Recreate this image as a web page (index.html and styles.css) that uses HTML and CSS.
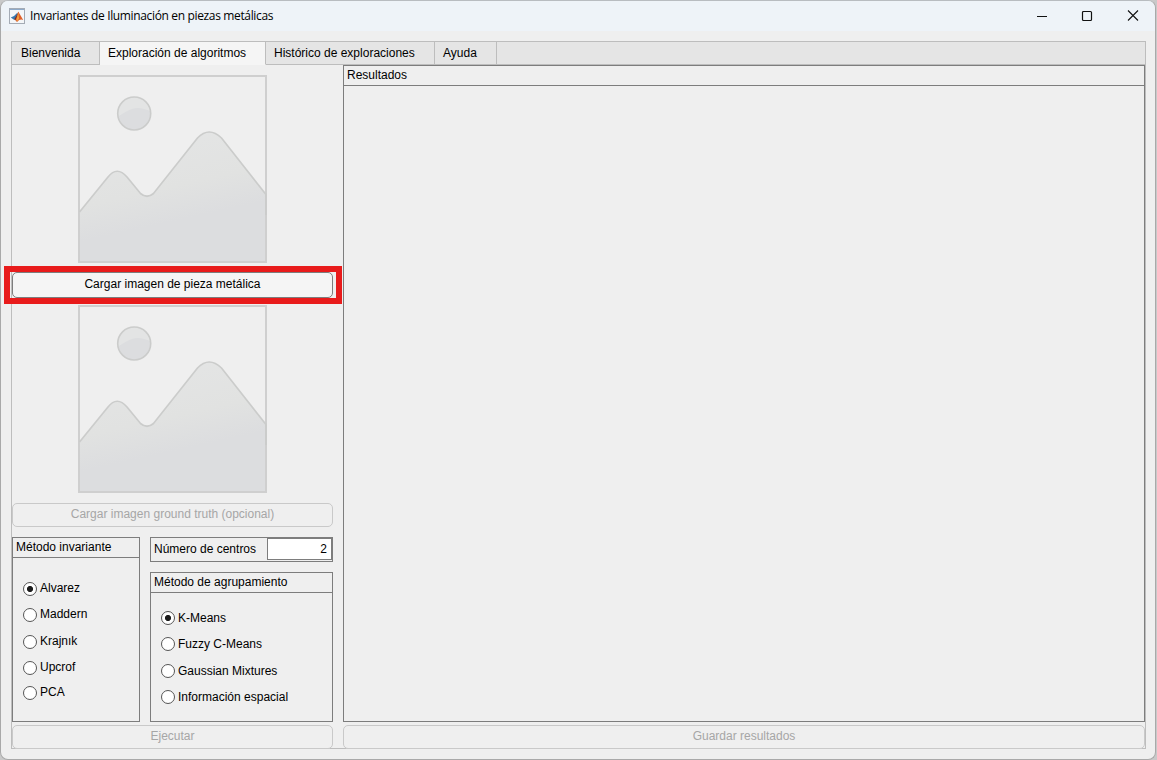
FILE: index.html
```html
<!DOCTYPE html>
<html lang="es">
<head>
<meta charset="utf-8">
<title>Invariantes de Iluminación en piezas metálicas</title>
<link rel="stylesheet" href="styles.css">
</head>
<body>
<svg class="defs" width="0" height="0">
  <defs>
    <linearGradient id="shade" gradientUnits="userSpaceOnUse" x1="80" y1="55" x2="101" y2="150">
      <stop offset="0" stop-color="#e4e5e5"/>
      <stop offset=".6" stop-color="#e1e2e1"/>
      <stop offset=".95" stop-color="#dcdddf"/>
    </linearGradient>
    <clipPath id="sun"><circle cx="56.2" cy="38.5" r="16.5"/></clipPath>
    <symbol id="placeholder" viewBox="0 0 189 188">
      <path d="M1.5 137 L30 102 Q39 90.500 49 102 L62.500 118.500 Q69 124 75.500 118.500 L119.500 63 Q131 51 143.500 63 L188 119.500 V187 H1.500 Z" fill="url(#shade)"/>
      <rect x="1" y="1" width="187" height="186" fill="none" stroke="#cfcfcf" stroke-width="2"/>
      <path d="M1.500 137 L30 102 Q39 90.500 49 102 L62.500 118.500 Q69 124 75.500 118.500 L119.500 63 Q131 51 143.500 63 L188 119.500 V140" fill="none" stroke="#cbcccb" stroke-width="1.700"/>
      <circle cx="56.200" cy="38.500" r="16.500" fill="#e3e4e4"/>
      <path d="M38 43 Q48 36 54 34 Q62 31 74 37 V58 H38Z" fill="#dcdddf" clip-path="url(#sun)"/>
      <circle cx="56.200" cy="38.500" r="16.500" fill="none" stroke="#cbcccb" stroke-width="1.600"/>
    </symbol>
  </defs>
</svg>
<div class="window">
  <header class="titlebar">
    <svg class="logo" width="16" height="16" viewBox="0 0 16 16">
      <rect x=".5" y=".5" width="15" height="15" fill="#f4f6f8" stroke="#a4abb5"/>
      <path d="M1 1h14v1H1z" fill="#8eaaca"/>
      <path d="M1.800 9.500 L5 8 L8.500 4.500 L7.500 9.500 L5 11.800Z" fill="#3878ae"/>
      <path d="M5 11.800 L7 8.500 L9.300 4 L10 7.500 L8 13.500 Q6.500 11.500 5 11.800Z" fill="#7b2c22"/>
      <path d="M9.300 3.500 Q11 6.500 14.200 12 Q11 10.500 8 14 L6.500 12 Q8.500 8.500 9.300 3.500Z" fill="#e0602a"/>
      <path d="M9.300 4.500 L10 10.500 L8 13.500 L7.500 11.500Z" fill="#f2a340"/>
    </svg>
    <span class="title">Invariantes de Iluminación en piezas metálicas</span>
    <svg class="controls" width="102" height="12" viewBox="0 0 102 12" fill="none" stroke="#111">
      <path d="M0 6.500H10" stroke-width="1"/>
      <rect x="45.500" y="1.500" width="9" height="9" rx="1" stroke-width="1.200"/>
      <path d="M91 .500 L101 10.500 M101 .500 L91 10.500" stroke-width="1.100"/>
    </svg>
  </header>
  <main class="tabgroup">
    <nav class="tabs">
      <span class="tab t1">Bienvenida</span>
      <span class="tab t2 active">Exploración de algoritmos</span>
      <span class="tab t3">Histórico de exploraciones</span>
      <span class="tab t4">Ayuda</span>
    </nav>
    <div class="content">
      <section class="left">
        <svg class="picture" width="189" height="188"><use href="#placeholder"/></svg>
        <div class="highlight"><button class="button load">Cargar imagen de pieza metálica</button></div>
        <svg class="picture second" width="189" height="188"><use href="#placeholder"/></svg>
        <button class="button truth" disabled>Cargar imagen ground truth (opcional)</button>
        <div class="options">
          <div class="panel invariant">
            <h2>Método invariante</h2>
            <div class="radios">
              <label><i class="dot on"></i><span>Alvarez</span></label>
              <label><i class="dot"></i><span>Maddern</span></label>
              <label><i class="dot"></i><span>Krajnık</span></label>
              <label><i class="dot"></i><span>Upcrof</span></label>
              <label><i class="dot"></i><span>PCA</span></label>
            </div>
          </div>
          <div class="side">
            <div class="panel centers"><span>Número de centros</span><div class="field">2</div></div>
            <div class="panel grouping">
              <h2>Método de agrupamiento</h2>
              <div class="radios">
                <label><i class="dot on"></i><span>K-Means</span></label>
                <label><i class="dot"></i><span>Fuzzy C-Means</span></label>
                <label><i class="dot"></i><span>Gaussian Mixtures</span></label>
                <label><i class="dot"></i><span>Información espacial</span></label>
              </div>
            </div>
          </div>
        </div>
        <button class="button run" disabled>Ejecutar</button>
      </section>
      <section class="right">
        <div class="panel results"><h2>Resultados</h2></div>
        <button class="button run" disabled>Guardar resultados</button>
      </section>
    </div>
  </main>
</div>
</body>
</html>
```
FILE: styles.css
```css
* { box-sizing: border-box; }
body {
  margin: 0;
  width: 1157px;
  height: 760px;
  overflow: hidden;
  background: #c9c9c9;
  font: 12px/14px "Liberation Sans", Arial, sans-serif;
  color: #000;
}
.defs { position: absolute; }
.window {
  width: 1156px;
  height: 760px;
  border: 1px solid #a9a9a9;
  border-top-color: #b8bcc0;
  border-radius: 8px;
  background: #efefef;
  overflow: hidden;
}
.titlebar {
  height: 30px;
  display: flex;
  align-items: center;
  padding: 0 16px 0 8px;
  background: #eef3f8;
}
.title {
  flex: 1;
  margin-left: 5px;
  font: 12px/16px "Open Sans", "Noto Sans", sans-serif;
  letter-spacing: -0.35px;
  white-space: nowrap;
}
.controls { display: block; }
.tabgroup {
  width: 1135px;
  height: 708px;
  margin: 10px 0 0 10px;
  border: 1px solid #bdbdbd;
}
.tabs {
  height: 23px;
  display: flex;
  background: #e5e5e5;
  border-bottom: 1px solid #bdbdbd;
}
.tab {
  height: 23px;
  padding: 4px 0 0 9px;
  border-right: 1px solid #bdbdbd;
  border-bottom: 1px solid #bdbdbd;
  white-space: nowrap;
}
.active { background: #f5f5f5; border-bottom-color: #f5f5f5; }
.t1 { width: 88px; }
.t2 { width: 166px; padding-left: 8px; }
.t3 { width: 169px; padding-left: 8px; }
.t4 { width: 62px; padding-left: 8px; }
.content { display: flex; gap: 10px; }
.left { width: 321px; display: flex; flex-direction: column; }
.right { width: 802px; display: flex; flex-direction: column; }
.picture { display: block; margin: 10px 0 0 66px; flex: none; }
.highlight {
  width: 338px;
  height: 38px;
  margin: 3px 0 0 -8px;
  padding: 0 2px;
  border: 6px solid #e81b1b;
  flex: none;
  z-index: 1;
}
.second { margin-top: 1px; }
.button {
  display: block;
  width: 100%;
  padding: 0 0 1px;
  border: 1px solid #7d7d7d;
  border-radius: 5px;
  background: #f5f5f5;
  font: inherit;
  color: #000;
  text-align: center;
  flex: none;
}
.button:disabled { border-color: #c9c9c9; background: #efefef; color: #a6a6a6; }
.load { width: 321px; height: 26px; padding-bottom: 3px; }
.truth { height: 24px; margin-top: 10px; padding-bottom: 3px; }
.run { height: 24px; margin-top: 3px; padding-bottom: 2px; }
.options { display: flex; gap: 10px; margin-top: 10px; height: 185px; }
.panel { border: 1px solid #7d7d7d; }
.panel h2 {
  height: 20px;
  margin: 0;
  padding: 2px 3px;
  border-bottom: 1px solid #7d7d7d;
  font: inherit;
}
.invariant { width: 128px; }
.side { width: 183px; }
.centers { height: 25px; display: flex; padding-left: 3px; justify-content: space-between; }
.centers span { padding-top: 4px; }
.field {
  width: 65px;
  height: 22px;
  padding: 3px 4px;
  border: 1px solid #7d7d7d;
  background: #fff;
  text-align: right;
}
.grouping { height: 150px; margin-top: 10px; }
.radios { display: grid; grid-template-rows: 26px 27px 26px 25px 26px; padding: 18px 0 0 10px; }
.radios label { display: flex; gap: 3px; align-items: center; height: 26px; }
.radios label:nth-child(2) { height: 26px; }
.radios label:nth-child(n) { align-self: start; }
.invariant span { padding-bottom: 2px; }
.grouping .radios { padding: 12px 0 0 10px; }
.dot {
  width: 14px;
  height: 14px;
  border: 1px solid #555;
  border-radius: 50%;
  background: #fff;
}
.on { background: radial-gradient(circle, #1c1c1c 0 2.700px, #fff 3.400px); }
.results { height: 657px; }
```
